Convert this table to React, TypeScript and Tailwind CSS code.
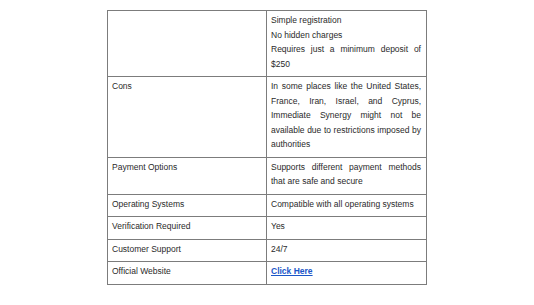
import React from 'react'

interface Row {
  label: string
  lines: React.ReactNode[]
  justify?: boolean
}

const rows: Row[] = [
  {
    label: '',
    lines: ['Simple registration', 'No hidden charges', 'Requires just a minimum deposit of $250'],
    justify: true,
  },
  {
    label: 'Cons',
    lines: [
      'In some places like the United States, France, Iran, Israel, and Cyprus, Immediate Synergy might not be available due to restrictions imposed by authorities',
    ],
    justify: true,
  },
  {
    label: 'Payment Options',
    lines: ['Supports different payment methods that are safe and secure'],
    justify: true,
  },
  { label: 'Operating Systems', lines: ['Compatible with all operating systems'] },
  { label: 'Verification Required', lines: ['Yes'] },
  { label: 'Customer Support', lines: ['24/7'] },
  {
    label: 'Official Website',
    lines: [
      <a key="l" href="#" className="font-bold text-[#1a56c8] underline">
        Click Here
      </a>,
    ],
  },
]

const App: React.FC = () => {
  return (
    <div className="w-[534px] h-[305px] bg-white flex justify-center pt-[10px] font-['Liberation_Sans',Arial,sans-serif] text-[8.5px] leading-[14.5px] text-[#2a2a2a]">
      <table className="w-[320px] h-fit border-collapse border-[1.5px] border-[#8c8c8c] table-fixed">
        <tbody>
          {rows.map((r, i) => (
            <tr key={i}>
              <td className="w-[159px] border border-[#7c7c7c] align-top pl-[4px] pr-[4px] pt-[2px] pb-[5px]">
                {r.label}
              </td>
              <td className="border border-[#7c7c7c] align-top pl-[4px] pr-[5px] pt-[2px] pb-[5px]">
                {r.lines.map((l, j) => (
                  <div
                    key={j}
                    className={r.justify ? 'text-justify [text-align-last:left]' : ''}
                  >
                    {l}
                  </div>
                ))}
              </td>
            </tr>
          ))}
        </tbody>
      </table>
    </div>
  )
}

export default App
